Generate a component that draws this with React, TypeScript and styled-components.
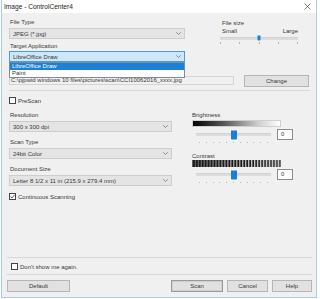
import React from "react";
import styled, { createGlobalStyle } from "styled-components";

const GlobalStyle = createGlobalStyle`
  html, body {
    margin: 0;
    background: #ffffff;
  }
  body {
    font-family: "Liberation Sans", Arial, sans-serif;
    font-size: 6px;
    color: #383838;
  }
`;

const Window = styled.div`
  position: relative;
  margin-left: 1px;
  width: 316px;
  height: 298px;
  box-sizing: border-box;
  border: 1px solid #a9cbee;
  border-top: none;
  background: #f0f0f0;
  display: flex;
  flex-direction: column;
`;

const TitleBar = styled.div`
  height: 13px;
  background: #ffffff;
  display: flex;
  align-items: center;
  justify-content: space-between;
  padding: 0 2px 0 2px;
  font-size: 6.6px;
  color: #222;
`;

const Body = styled.div`
  flex: 1;
  padding: 0 6px 0 7px;
  display: flex;
  flex-direction: column;
`;

const Row = styled.div<{ $mt?: number }>`
  display: flex;
  align-items: flex-start;
  margin-top: ${(p) => p.$mt ?? 0}px;
`;

const Column = styled.div<{ $w?: number; $ml?: number; $mt?: number }>`
  display: flex;
  flex-direction: column;
  width: ${(p) => (p.$w ? `${p.$w}px` : "auto")};
  margin-left: ${(p) => p.$ml ?? 0}px;
  margin-top: ${(p) => p.$mt ?? 0}px;
`;

const Label = styled.div<{ $mt?: number; $pl?: number }>`
  height: 8px;
  line-height: 8px;
  margin-top: ${(p) => p.$mt ?? 0}px;
  padding-left: ${(p) => p.$pl ?? 1}px;
  white-space: nowrap;
`;

const SelectBox = styled.div<{ $mt?: number; $active?: boolean }>`
  position: relative;
  height: 11px;
  box-sizing: border-box;
  margin-top: ${(p) => p.$mt ?? 0}px;
  border: 1px solid ${(p) => (p.$active ? "#4a9be0" : "#cdcdcd")};
  background: ${(p) => (p.$active ? "#cfe5f8" : "#e4e4e4")};
  display: flex;
  align-items: center;
  justify-content: space-between;
  padding: 0 3px 0 3px;
  white-space: nowrap;
`;

const DropList = styled.div`
  position: absolute;
  left: -1px;
  right: -1px;
  top: 10px;
  border: 1px solid #7d8a99;
  background: #ffffff;
  display: flex;
  flex-direction: column;
  z-index: 2;
`;

const DropItem = styled.div<{ $sel?: boolean }>`
  height: 7px;
  line-height: 7px;
  padding-left: 2px;
  background: ${(p) => (p.$sel ? "#1a80d8" : "#ffffff")};
  color: ${(p) => (p.$sel ? "#ffffff" : "#383838")};
`;

const PathField = styled.div`
  width: 225px;
  height: 9px;
  margin-top: 1px;
  box-sizing: border-box;
  border: 1px solid #d4d4d4;
  padding-left: 1px;
  line-height: 7px;
  white-space: nowrap;
  overflow: hidden;
`;

const Button = styled.div<{ $w: number; $primary?: boolean; $ml?: number }>`
  width: ${(p) => p.$w}px;
  height: 12px;
  box-sizing: border-box;
  margin-left: ${(p) => p.$ml ?? 0}px;
  border: 1px solid ${(p) => (p.$primary ? "#9a9a9a" : "#b5b5b5")};
  box-shadow: ${(p) => (p.$primary ? "inset 0 0 0 1px #cfcfcf" : "none")};
  background: #e1e1e1;
  display: flex;
  align-items: center;
  justify-content: center;
  color: #3a3a3a;
`;

const Separator = styled.div<{ $mt?: number }>`
  height: 1px;
  margin-top: ${(p) => p.$mt ?? 0}px;
  background: #d7d7d7;
`;

const CheckRow = styled.div<{ $mt?: number; $ml?: number }>`
  display: flex;
  align-items: center;
  height: 7px;
  gap: 2px;
  margin-top: ${(p) => p.$mt ?? 0}px;
  margin-left: ${(p) => p.$ml ?? 0}px;
  white-space: nowrap;
`;

const Box = styled.div`
  width: 7px;
  height: 7px;
  box-sizing: border-box;
  border: 1px solid #444;
  background: #fff;
  display: flex;
  align-items: center;
  justify-content: center;
`;

const SliderWrap = styled.div<{ $w: number; $ml?: number; $mt?: number }>`
  width: ${(p) => p.$w}px;
  margin-left: ${(p) => p.$ml ?? 0}px;
  margin-top: ${(p) => p.$mt ?? 0}px;
  display: flex;
  flex-direction: column;
`;

const TrackArea = styled.div<{ $h: number }>`
  position: relative;
  height: ${(p) => p.$h}px;
  display: flex;
  align-items: center;
`;

const Track = styled.div`
  flex: 1;
  height: 2px;
  background: #dcdcdc;
  border-top: 1px solid #d2d2d2;
`;

const Thumb = styled.div<{ $w: number; $h: number }>`
  position: absolute;
  top: 50%;
  width: ${(p) => p.$w}px;
  height: ${(p) => p.$h}px;
  transform: translate(-50%, -50%);
  background: #1a7fd6;
  border-radius: 0 0 1px 1px;
`;

const Ticks = styled.div<{ $mt: number; $pad: number }>`
  display: flex;
  justify-content: space-between;
  margin-top: ${(p) => p.$mt}px;
  padding: 0 ${(p) => p.$pad}px;
`;

const Tick = styled.div<{ $h: number }>`
  width: 1px;
  height: ${(p) => p.$h}px;
  background: #b4b4b4;
`;

const SideRow = styled.div`
  display: flex;
  justify-content: space-between;
  height: 8px;
  line-height: 8px;
  padding: 0 2px;
`;

const GradientBar = styled.div`
  width: 89px;
  height: 7px;
  margin-top: 1px;
  box-sizing: border-box;
  border: 1px solid #cfcfcf;
  background: linear-gradient(to right, #000 0%, #555 35%, #cfcfcf 75%, #fff 100%);
`;

const ValueBox = styled.div`
  width: 16px;
  height: 11px;
  box-sizing: border-box;
  border: 1px solid #8c8c8c;
  background: #fff;
  padding-left: 3px;
  line-height: 9px;
  margin-left: 6px;
`;

const Footer = styled.div`
  display: flex;
  flex-direction: column;
  padding: 0 4px 5px 5px;
`;

const Spacer = styled.div`
  flex: 1;
`;

const Chevron = () => (
  <svg width="5" height="3" viewBox="0 0 5 3">
    <polyline points="0.3,0.3 2.5,2.5 4.7,0.3" fill="none" stroke="#666" strokeWidth="0.7" />
  </svg>
);

const CheckMark = () => (
  <svg width="5" height="5" viewBox="0 0 5 5">
    <polyline points="0.5,2.6 2,4 4.6,0.8" fill="none" stroke="#333" strokeWidth="0.8" />
  </svg>
);

const CloseIcon = () => (
  <svg width="7" height="7" viewBox="0 0 7 7" style={{ marginRight: 3 }}>
    <path d="M0.5 0.5 L6.5 6.5 M6.5 0.5 L0.5 6.5" stroke="#555" strokeWidth="0.7" />
  </svg>
);

const ContrastBars = () => {
  const bars = [];
  for (let i = 0; i < 30; i++) {
    const gap = 0.4 + (i / 29) * 1.4;
    bars.push(<rect key={i} x={i * 2.95 + gap} y={0} width={2.95 - gap} height={7} fill="#1c1c1c" />);
  }
  return (
    <svg width="89" height="7" viewBox="0 0 89 7" style={{ display: "block" }}>
      <rect x="0" y="0" width="89" height="7" fill="#c4c4c4" />
      {bars}
    </svg>
  );
};

function Slider(props: {
  width: number;
  ml?: number;
  mt?: number;
  areaH: number;
  pos: number;
  thumbW: number;
  thumbH: number;
  ticks: number;
  tickH: number;
  tickGap: number;
  tickPad: number;
}) {
  const ticks = [];
  for (let i = 0; i < props.ticks; i++) ticks.push(<Tick key={i} $h={props.tickH} />);
  return (
    <SliderWrap $w={props.width} $ml={props.ml} $mt={props.mt}>
      <TrackArea $h={props.areaH}>
        <Track />
        <Thumb $w={props.thumbW} $h={props.thumbH} style={{ left: `${props.pos}px` }} />
      </TrackArea>
      <Ticks $mt={props.tickGap} $pad={props.tickPad}>
        {ticks}
      </Ticks>
    </SliderWrap>
  );
}

export default function App() {
  return (
    <>
      <GlobalStyle />
      <Window>
        <TitleBar>
          <span>Image - ControlCenter4</span>
          <CloseIcon />
        </TitleBar>
        <Body>
          <Row $mt={5}>
            <Column $w={176}>
              <Label>File Type</Label>
              <SelectBox $mt={2}>
                <span>JPEG (*.jpg)</span>
                <Chevron />
              </SelectBox>
              <Label $mt={3}>Target Application</Label>
              <SelectBox $mt={1} $active>
                <span>LibreOffice Draw</span>
                <Chevron />
                <DropList>
                  <DropItem $sel>LibreOffice Draw</DropItem>
                  <DropItem>Paint</DropItem>
                </DropList>
              </SelectBox>
            </Column>
            <Column $w={80} $ml={35} $mt={1}>
              <Label $pl={2}>File size</Label>
              <SideRow>
                <span>Small</span>
                <span>Large</span>
              </SideRow>
              <Slider
                width={78}
                areaH={6}
                pos={39}
                thumbW={3}
                thumbH={5}
                ticks={5}
                tickH={2}
                tickGap={1}
                tickPad={0}
              />
            </Column>
          </Row>
          <Row $mt={13}>
            <PathField>C:\pjpwid windows 10 files\pictures\scan\CCI10062016_xxxx.jpg</PathField>
            <Button $w={65} $ml={10}>Change</Button>
          </Row>
          <Separator $mt={3} />
          <Row $mt={6}>
            <Column $w={163}>
              <CheckRow>
                <Box />
                <span>PreScan</span>
              </CheckRow>
              <Label $mt={7}>Resolution</Label>
              <SelectBox $mt={2}>
                <span>300 x 300 dpi</span>
                <Chevron />
              </SelectBox>
              <Label $mt={6}>Scan Type</Label>
              <SelectBox $mt={2}>
                <span>24bit Color</span>
                <Chevron />
              </SelectBox>
              <Label $mt={6}>Document Size</Label>
              <SelectBox $mt={2}>
                <span>Letter 8 1/2 x 11 in (215.9 x 279.4 mm)</span>
                <Chevron />
              </SelectBox>
              <CheckRow $mt={7}>
                <Box>
                  <CheckMark />
                </Box>
                <span>Continuous Scanning</span>
              </CheckRow>
            </Column>
            <Column $ml={20} $mt={14}>
              <Label $pl={0}>Brightness</Label>
              <GradientBar />
              <Row $mt={2}>
                <Slider
                  width={75}
                  ml={4}
                  areaH={11}
                  pos={38}
                  thumbW={6}
                  thumbH={9}
                  ticks={11}
                  tickH={1}
                  tickGap={2}
                  tickPad={3}
                />
                <ValueBox>0</ValueBox>
              </Row>
              <Label $pl={0} $mt={9}>Contrast</Label>
              <ContrastBars />
              <Row $mt={2}>
                <Slider
                  width={75}
                  ml={4}
                  areaH={11}
                  pos={38}
                  thumbW={6}
                  thumbH={9}
                  ticks={11}
                  tickH={1}
                  tickGap={2}
                  tickPad={3}
                />
                <ValueBox>0</ValueBox>
              </Row>
            </Column>
          </Row>
          <Spacer />
        </Body>
        <Footer>
          <Separator />
          <CheckRow $mt={5} $ml={4}>
            <Box />
            <span>Don't show me again.</span>
          </CheckRow>
          <Separator $mt={4} />
          <Row $mt={5}>
            <Button $w={63}>Default</Button>
            <Spacer />
            <Button $w={52} $primary>Scan</Button>
            <Button $w={41} $ml={4}>Cancel</Button>
            <Button $w={40} $ml={4}>Help</Button>
          </Row>
        </Footer>
      </Window>
    </>
  );
}
